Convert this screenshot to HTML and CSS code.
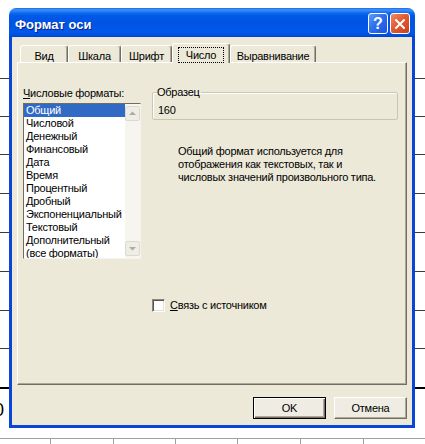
FILE: index.html
```html
<!DOCTYPE html>
<html lang="ru">
<head>
<meta charset="utf-8">
<title>Формат оси</title>
<link rel="stylesheet" href="styles.css">
</head>
<body>
<div class="sheet">
  <div class="row first"></div>
  <div class="row"></div>
  <div class="row"></div>
  <div class="row tall"></div>
  <div class="row tall"></div>
  <div class="row tall"></div>
  <div class="row tall"></div>
  <div class="row"></div>
  <div class="row axis"></div>
  <div class="row labels"><span class="axis-label">0</span></div>
  <div class="cells"><span></span><span></span><span></span><span></span><span></span><span></span><span></span></div>
</div>

<div class="window">
  <div class="titlebar">
    <span class="title">Формат оси</span>
    <div class="caption-buttons">
      <span class="cbtn help">?</span>
      <span class="cbtn close"><svg width="20" height="20" viewBox="0 0 20 20"><path d="M5.5 5.5 L14.5 14.5 M14.5 5.5 L5.5 14.5" stroke="#fff" stroke-width="2.2" stroke-linecap="round"/></svg></span>
    </div>
  </div>
  <div class="client">
    <div class="tabs">
      <div class="tab t-vid">Вид</div>
      <div class="tab t-scale">Шкала</div>
      <div class="tab t-font">Шрифт</div>
      <div class="tab selected t-num"><span class="focus">Число</span></div>
      <div class="tab t-align">Выравнивание</div>
    </div>
    <div class="panel">
      <div class="left">
        <div class="label"><u>Ч</u>исловые форматы:</div>
        <div class="listbox">
          <ul class="items">
            <li class="sel">Общий</li>
            <li>Числовой</li>
            <li>Денежный</li>
            <li>Финансовый</li>
            <li>Дата</li>
            <li>Время</li>
            <li>Процентный</li>
            <li>Дробный</li>
            <li>Экспоненциальный</li>
            <li>Текстовый</li>
            <li>Дополнительный</li>
            <li>(все форматы)</li>
          </ul>
          <div class="vscroll">
            <span class="sb-btn"><svg width="13" height="13" viewBox="0 0 13 13"><path d="M3 8 L6.5 4.5 L10 8 Z" fill="#aeac9f"/></svg></span>
            <span class="sb-track"></span>
            <span class="sb-btn"><svg width="13" height="13" viewBox="0 0 13 13"><path d="M3 5 L6.5 8.5 L10 5 Z" fill="#aeac9f"/></svg></span>
          </div>
        </div>
      </div>
      <div class="right">
        <fieldset class="sample">
          <legend>Образец</legend>
          <div class="sample-value">160</div>
        </fieldset>
        <p class="desc">Общий формат используется для<br>отображения как текстовых, так и<br>числовых значений произвольного типа.</p>
        <label class="check"><span class="box"></span><span><u>С</u>вязь с источником</span></label>
      </div>
    </div>
    <div class="buttons">
      <button class="btn default">OK</button>
      <button class="btn">Отмена</button>
    </div>
  </div>
</div>
</body>
</html>
```

FILE: styles.css
```css
* { box-sizing: border-box; }
html, body { margin: 0; padding: 0; }
body {
  width: 425px;
  height: 444px;
  overflow: hidden;
  background: #fff;
  position: relative;
  font-family: "Liberation Sans", Arial, sans-serif;
  font-size: 11px;
  color: #000;
}

/* background spreadsheet / chart */
.sheet { display: flex; flex-direction: column; }
.row { flex: none; height: 38px; border-bottom: 1px solid #3a3a3a; }
.row.first { height: 79px; }
.row.tall { height: 39px; }
.row.axis { height: 40px; border-bottom: 2px solid #000; }
.row.labels { height: 50px; border-bottom: 1px solid #a0a0a0; padding-top: 12px; }
.axis-label { display: block; font-size: 18px; line-height: 18px; margin-left: -6px; }
.cells {
  height: 10px;
  display: grid;
  grid-template-columns: 50px 63px 62px 62px 63px 63px 1fr;
}
.cells span + span { border-left: 1px solid #a0a0a0; }

/* window */
.window {
  position: absolute;
  left: 9px;
  top: 8px;
  width: 406px;
  height: 420px;
  display: flex;
  flex-direction: column;
}
.titlebar {
  flex: none;
  height: 29px;
  border-radius: 7px 7px 0 0;
  background: linear-gradient(to bottom, #0a5de8 0px, #3d8df5 1px, #2f84f7 3px, #0e68ee 5px, #0059e7 8px, #0054e3 14px, #0056e7 20px, #0058ea 24px, #0050de 27px, #0044d0 29px);
  display: flex;
  justify-content: space-between;
  align-items: flex-start;
  padding: 0 5px 0 6px;
}
.title {
  color: #fff;
  font-weight: bold;
  font-size: 13px;
  line-height: 25px;
  padding-top: 4px;
  text-shadow: 1px 1px 0 #0a1f8a;
}
.caption-buttons { display: flex; gap: 2px; margin-top: 5px; }
.cbtn {
  width: 20px;
  height: 21px;
  border: 1px solid #fff;
  border-radius: 3px;
  display: flex;
  align-items: center;
  justify-content: center;
  color: #fff;
}
.cbtn.help {
  background: linear-gradient(135deg, #5e9cfa 0%, #2d6ff0 45%, #1a56e0 100%);
  font-weight: bold;
  font-size: 16px;
  line-height: 19px;
}
.cbtn.close {
  background: linear-gradient(135deg, #f08a66 0%, #e15b32 45%, #c8411c 100%);
}

.client {
  flex: 1;
  background: #ece9d8;
  border: 3px solid #0a45da;
  border-top: none;
  padding: 6px 5px 6px 5px;
  display: flex;
  flex-direction: column;
  letter-spacing: -0.25px;
}

/* tabs */
.tabs {
  flex: none;
  height: 19px;
  display: flex;
  align-items: flex-end;
  margin-left: 3px;
  position: relative;
  z-index: 1;
}
.tab {
  height: 17px;
  border-top: 1px solid #fff;
  border-left: 1px solid #fff;
  border-right: 1px solid #716f64;
  box-shadow: inset -1px 0 0 #aca899;
  border-radius: 3px 3px 0 0;
  text-align: center;
  padding-top: 4px;
  line-height: 12px;
  background: #ece9d8;
}
.t-vid { width: 48px; }
.t-scale { width: 53px; }
.t-font { width: 51px; }
.t-num { width: 58px; }
.t-align { width: 86px; }
.tab.selected {
  height: 20px;
  margin-bottom: -1px;
  padding-top: 3px;
}
.focus {
  display: inline-block;
  border: 1px dotted #000;
  padding: 0 7px;
  line-height: 14px;
}

/* panel */
.panel {
  flex: none;
  height: 323px;
  border-top: 1px solid #fff;
  border-left: 1px solid #fff;
  border-right: 1px solid #716f64;
  border-bottom: 1px solid #716f64;
  box-shadow: inset -1px -1px 0 #aca899;
  padding: 24px 0 0 5px;
  display: flex;
}
.left { width: 118px; flex: none; }
.label { line-height: 13px; margin-bottom: 3px; }
.listbox {
  height: 156px;
  background: #fff;
  border: 1px solid;
  border-color: #6f6d62 #f4f3ee #f4f3ee #6f6d62;
  display: flex;
}
.items {
  list-style: none;
  margin: 0;
  padding: 0;
  flex: 1;
  overflow: hidden;
}
.items li { height: 13px; line-height: 13px; padding-left: 2px; white-space: nowrap; }
.items li.sel { background: #316ac5; color: #fff; }
.vscroll {
  width: 15px;
  flex: none;
  background: #f6f5f0;
  display: flex;
  flex-direction: column;
  padding: 2px 0 2px 0;
}
.sb-btn {
  width: 15px;
  height: 15px;
  border: 1px solid #dcdad0;
  border-radius: 2px;
  background: #efeee6;
  display: flex;
  align-items: center;
  justify-content: center;
}
.sb-track { flex: 1; }

.right { width: 246px; margin-left: 11px; flex: none; }
.sample {
  margin: -1px 0 0 0;
  padding: 0 0 2px 4px;
  border: 1px solid #c9c6b6;
  border-radius: 2px;
  box-shadow: inset 1px 1px 0 #fff;
  min-width: 0;
}
.sample legend { padding: 0 1px 0 0; line-height: 13px; font-size: 11px; }
.sample-value { margin-top: 5px; margin-left: 1px; line-height: 13px; }
.desc { margin: 25px 0 0 26px; line-height: 13px; white-space: nowrap; }
.check {
  margin-top: 115px;
  display: flex;
  align-items: center;
  gap: 5px;
  line-height: 13px;
}
.box {
  width: 13px;
  height: 13px;
  background: #fff;
  border: 1px solid;
  border-color: #8a8879 #fff #fff #8a8879;
  box-shadow: inset 1px 1px 0 #5a584e, inset -1px -1px 0 #e2e0d4;
}

/* buttons */
.buttons {
  margin-top: 12px;
  display: flex;
  justify-content: flex-end;
  gap: 8px;
}
.btn {
  width: 73px;
  height: 22px;
  font-family: "Liberation Sans", Arial, sans-serif;
  font-size: 11px;
  letter-spacing: -0.25px;
  color: #000;
  background: #efede3;
  border: 1px solid;
  border-color: #fff #716f64 #716f64 #fff;
  box-shadow: inset -1px -1px 0 #aca899;
  padding: 0;
}
.btn.default {
  border: 1px solid #000;
  box-shadow: inset 1px 1px 0 #fff, inset -1px -1px 0 #716f64, inset -2px -2px 0 #aca899;
}
```
